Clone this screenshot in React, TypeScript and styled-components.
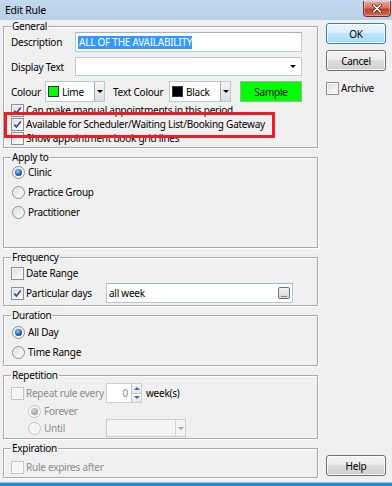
import React from 'react'
import styled, { createGlobalStyle } from 'styled-components'

const GlobalStyle = createGlobalStyle`
  html, body {
    margin: 0;
    padding: 0;
    background: #f0f0f0;
  }
  body {
    font-family: 'Noto Sans', 'Open Sans', sans-serif;
    font-size: 10px;
    letter-spacing: -0.25px;
    color: #000;
  }
  * {
    box-sizing: border-box;
  }
`

const Window = styled.div`
  width: 392px;
  height: 486px;
  display: flex;
  flex-direction: column;
  overflow: hidden;
  background: #f0f0f0;
`

const TitleBar = styled.div`
  height: 20px;
  flex: none;
  display: flex;
  align-items: center;
  padding-left: 5px;
  background: linear-gradient(#c3d8ef, #b9d0e9);
`

const Title = styled.span`
  font-size: 10.5px;
`

const CloseButton = styled.div`
  align-self: flex-start;
  margin: 1px 1px 0 auto;
  width: 28px;
  height: 16px;
  display: flex;
  align-items: center;
  justify-content: center;
  border: 1px solid #7d2a1f;
  border-top: none;
  border-radius: 0 0 4px 4px;
  background: linear-gradient(#e9a99c 0%, #d8725f 45%, #c0402a 55%, #d06a4f 100%);
  box-shadow: inset 0 0 0 1px rgba(255, 255, 255, 0.35);
`

const Body = styled.div`
  flex: 1;
  display: flex;
`

const LeftColumn = styled.div`
  width: 315px;
  margin-left: 3px;
  display: flex;
  flex-direction: column;
  gap: 3px;
`

const Group = styled.fieldset<{ $height: number }>`
  margin: 0;
  padding: 0 4px 0 7px;
  min-width: 0;
  height: ${({ $height }) => $height}px;
  border: 1px solid #a9a9a9;
  box-shadow: inset 1px 1px 0 #fff, 1px 1px 0 #fff;
  color: #000;
`

const Legend = styled.legend`
  padding: 0 1px;
  line-height: 12px;
  font-size: 10px;
  color: #000;
`

const Row = styled.div<{ $h: number; $mt?: number; $indent?: number }>`
  display: flex;
  align-items: center;
  height: ${({ $h }) => $h}px;
  margin-top: ${({ $mt }) => $mt ?? 0}px;
  padding-left: ${({ $indent }) => $indent ?? 0}px;
`

const FieldLabel = styled.span<{ $w: number; $disabled?: boolean; $ml?: number }>`
  flex: none;
  width: ${({ $w }) => $w}px;
  margin-left: ${({ $ml }) => $ml ?? 0}px;
  color: ${({ $disabled }) => ($disabled ? '#8b8b8b' : '#000')};
  white-space: nowrap;
`

const TextBox = styled.div<{ $w: number; $h: number }>`
  flex: none;
  width: ${({ $w }) => $w}px;
  height: ${({ $h }) => $h}px;
  display: flex;
  align-items: center;
  padding: 0 2px;
  background: #fff;
  border: 1px solid #b9c6d4;
  border-top-color: #a6b4c4;
  white-space: nowrap;
`

const Selected = styled.span`
  background: #3399ff;
  color: #fff;
  line-height: 13px;
  padding: 0 0 0 1px;
`

const Arrow = styled.span<{ $color?: string }>`
  width: 0;
  height: 0;
  border-left: 3px solid transparent;
  border-right: 3px solid transparent;
  border-top: 3px solid ${({ $color }) => $color ?? '#000'};
`

const ComboBox = styled(TextBox)<{ $disabled?: boolean }>`
  justify-content: space-between;
  padding: ${({ $disabled }) => ($disabled ? '0' : '0 5px 0 2px')};
  background: ${({ $disabled }) => ($disabled ? '#f4f4f4' : '#fff')};
  border-color: ${({ $disabled }) => ($disabled ? '#cdcdcd' : '#b9c6d4')};
`

const ColourCombo = styled.div<{ $w: number }>`
  flex: none;
  width: ${({ $w }) => $w}px;
  height: 21px;
  display: flex;
  align-items: center;
  background: #fff;
  border: 1px solid #b9c6d4;
  padding-left: 2px;
`

const Swatch = styled.span<{ $color: string }>`
  width: 11px;
  height: 11px;
  flex: none;
  background: ${({ $color }) => $color};
  border: 1px solid #333;
  margin-right: 3px;
`

const DropButton = styled.span<{ $disabled?: boolean }>`
  margin-left: auto;
  width: 10px;
  height: 100%;
  display: flex;
  align-items: center;
  justify-content: center;
  border-left: 1px solid ${({ $disabled }) => ($disabled ? '#d4d4d4' : '#a8a8a8')};
  background: ${({ $disabled }) => ($disabled ? '#f4f4f4' : 'linear-gradient(#f6f6f6, #dedede)')};
`

const SampleButton = styled.div`
  flex: none;
  width: 62px;
  height: 21px;
  margin-left: 9px;
  display: flex;
  align-items: center;
  justify-content: center;
  background: #00ff00;
  border: 1px solid #9ab59a;
`

const CheckStack = styled.div`
  position: relative;
  margin-top: 1px;
`

const Highlight = styled.div`
  position: absolute;
  left: -7px;
  top: 9px;
  width: 271px;
  height: 26px;
  border: 3px solid #e5202a;
  pointer-events: none;
`

const Box = styled.span<{ $disabled?: boolean }>`
  flex: none;
  width: 13px;
  height: 13px;
  display: flex;
  align-items: center;
  justify-content: center;
  border: 1px solid ${({ $disabled }) => ($disabled ? '#c3c3c3' : '#8e8f8f')};
  background: ${({ $disabled }) =>
    $disabled ? '#f4f4f4' : 'linear-gradient(135deg, #d6d9de 0%, #f2f2f2 60%, #fcfcfc 100%)'};
  box-shadow: inset 0 0 0 1px ${({ $disabled }) => ($disabled ? '#fafafa' : '#f4f4f4')};
  margin-right: 2px;
`

const Round = styled(Box)`
  border-radius: 50%;
  margin: 0 3px 0 1px;
`

const Dot = styled.span<{ $disabled?: boolean }>`
  width: 7px;
  height: 7px;
  border-radius: 50%;
  background: ${({ $disabled }) =>
    $disabled
      ? 'radial-gradient(circle at 40% 35%, #d8d8d8, #9a9a9a 75%)'
      : 'radial-gradient(circle at 40% 35%, #8fd3f7, #1d5fa6 55%, #0e3a70 100%)'};
`

const Label = styled.span<{ $disabled?: boolean }>`
  color: ${({ $disabled }) => ($disabled ? '#8b8b8b' : '#000')};
  white-space: nowrap;
`

const EllipsisButton = styled.span`
  margin-left: auto;
  width: 12px;
  height: 12px;
  display: flex;
  align-items: flex-end;
  justify-content: center;
  font-size: 8px;
  line-height: 9px;
  letter-spacing: 0;
  border: 1px solid #707070;
  border-radius: 2px;
  background: linear-gradient(#f4f4f4, #d8d8d8);
`

const Spin = styled.div`
  flex: none;
  width: 36px;
  height: 20px;
  display: flex;
  border: 1px solid #cdcdcd;
  background: #fff;
`

const SpinValue = styled.span`
  flex: 1;
  text-align: right;
  padding-right: 3px;
  line-height: 18px;
  color: #8b8b8b;
`

const SpinButtons = styled.div`
  width: 10px;
  display: flex;
  flex-direction: column;
  border-left: 1px solid #c7c7c7;
`

const SpinHalf = styled.span<{ $up?: boolean }>`
  flex: 1;
  display: flex;
  align-items: center;
  justify-content: center;
  background: linear-gradient(#f8f8f8, #e6e6e6);
  border-bottom: ${({ $up }) => ($up ? '1px solid #c7c7c7' : 'none')};
`

const SpinArrow = styled.span<{ $up?: boolean }>`
  width: 0;
  height: 0;
  border-left: 3px solid transparent;
  border-right: 3px solid transparent;
  ${({ $up }) => ($up ? 'border-bottom: 3px solid #4467a8;' : 'border-top: 3px solid #4467a8;')}
`

const Units = styled.span`
  margin-left: 4px;
`

const RightColumn = styled.div`
  flex: 1;
  display: flex;
  flex-direction: column;
  padding: 3px 6px 6px 8px;
`

const PushButton = styled.div<{ $default?: boolean; $mt?: number }>`
  width: 60px;
  height: 21px;
  margin-top: ${({ $mt }) => $mt ?? 0}px;
  display: flex;
  align-items: center;
  justify-content: center;
  border: 1px solid ${({ $default }) => ($default ? '#3c7fb1' : '#707070')};
  border-radius: 3px;
  background: ${({ $default }) =>
    $default
      ? 'linear-gradient(#eaf6fd 0%, #d9f0fc 50%, #bee6fd 50%, #a7d9f5 100%)'
      : 'linear-gradient(#f2f2f2 0%, #ebebeb 50%, #dddddd 50%, #cfcfcf 100%)'};
  box-shadow: inset 0 0 0 1px rgba(255, 255, 255, 0.75);
`

const Spacer = styled.div`
  flex: 1;
`

const BottomFrame = styled.div`
  height: 4px;
  flex: none;
  border-top: 1px solid #8cc6ee;
  background: #2f86d0;
`

const Tick = () => (
  <svg width='9' height='9' viewBox='0 0 9 9'>
    <path d='M1.2 4.6 L3.4 7 L7.8 1.4' fill='none' stroke='#2a4a9a' strokeWidth='1.6' />
  </svg>
)

const CloseGlyph = () => (
  <svg width='10' height='9' viewBox='0 0 10 9'>
    <path d='M1.5 1 L8.5 8 M8.5 1 L1.5 8' stroke='#5a1a10' strokeWidth='3' strokeLinecap='round' />
    <path d='M1.5 1 L8.5 8 M8.5 1 L1.5 8' stroke='#fff' strokeWidth='1.6' strokeLinecap='round' />
  </svg>
)

const Check = ({ checked, disabled }: { checked?: boolean; disabled?: boolean }) => (
  <Box $disabled={disabled}>{checked && <Tick />}</Box>
)

const Radio = ({ checked, disabled }: { checked?: boolean; disabled?: boolean }) => (
  <Round $disabled={disabled}>{checked && <Dot $disabled={disabled} />}</Round>
)

export default function App() {
  return (
    <>
      <GlobalStyle />
      <Window>
        <TitleBar>
          <Title>Edit Rule</Title>
          <CloseButton>
            <CloseGlyph />
          </CloseButton>
        </TitleBar>
        <Body>
          <LeftColumn>
            <Group $height={128}>
              <Legend>General</Legend>
              <Row $h={20}>
                <FieldLabel $w={64}>Description</FieldLabel>
                <TextBox $w={227} $h={20}>
                  <Selected>ALL OF THE AVAILABILITY</Selected>
                </TextBox>
              </Row>
              <Row $h={19} $mt={5}>
                <FieldLabel $w={64}>Display Text</FieldLabel>
                <ComboBox $w={227} $h={19}>
                  <span />
                  <Arrow />
                </ComboBox>
              </Row>
              <Row $h={21} $mt={5}>
                <FieldLabel $w={34}>Colour</FieldLabel>
                <ColourCombo $w={60}>
                  <Swatch $color='#00ff00' />
                  Lime
                  <DropButton>
                    <Arrow />
                  </DropButton>
                </ColourCombo>
                <FieldLabel $w={56} $ml={8}>
                  Text Colour
                </FieldLabel>
                <ColourCombo $w={62}>
                  <Swatch $color='#000' />
                  Black
                  <DropButton>
                    <Arrow />
                  </DropButton>
                </ColourCombo>
                <SampleButton>Sample</SampleButton>
              </Row>
              <CheckStack>
                <Row $h={14}>
                  <Check checked />
                  <Label>Can make manual appointments in this period</Label>
                </Row>
                <Row $h={14}>
                  <Check checked />
                  <Label>Available for Scheduler/Waiting List/Booking Gateway</Label>
                </Row>
                <Row $h={14}>
                  <Check />
                  <Label>Show appointment book grid lines</Label>
                </Row>
                <Highlight />
              </CheckStack>
            </Group>

            <Group $height={97}>
              <Legend>Apply to</Legend>
              <Row $h={20} $mt={-1}>
                <Radio checked />
                <Label>Clinic</Label>
              </Row>
              <Row $h={20}>
                <Radio />
                <Label>Practice Group</Label>
              </Row>
              <Row $h={20}>
                <Radio />
                <Label>Practitioner</Label>
              </Row>
            </Group>

            <Group $height={55}>
              <Legend>Frequency</Legend>
              <Row $h={18} $mt={1}>
                <Check />
                <Label>Date Range</Label>
              </Row>
              <Row $h={20} $mt={1}>
                <Check checked />
                <FieldLabel $w={80}>Particular days</FieldLabel>
                <TextBox $w={187} $h={20}>
                  all week
                  <EllipsisButton>...</EllipsisButton>
                </TextBox>
              </Row>
            </Group>

            <Group $height={57}>
              <Legend>Duration</Legend>
              <Row $h={20} $mt={1}>
                <Radio checked />
                <Label>All Day</Label>
              </Row>
              <Row $h={20}>
                <Radio />
                <Label>Time Range</Label>
              </Row>
            </Group>

            <Group $height={70}>
              <Legend>Repetition</Legend>
              <Row $h={20} $mt={2}>
                <Check disabled />
                <FieldLabel $w={80} $disabled>
                  Repeat rule every
                </FieldLabel>
                <Spin>
                  <SpinValue>0</SpinValue>
                  <SpinButtons>
                    <SpinHalf $up>
                      <SpinArrow $up />
                    </SpinHalf>
                    <SpinHalf>
                      <SpinArrow />
                    </SpinHalf>
                  </SpinButtons>
                </Spin>
                <Units>week(s)</Units>
              </Row>
              <Row $h={16} $indent={16}>
                <Radio checked disabled />
                <Label $disabled>Forever</Label>
              </Row>
              <Row $h={18} $indent={16}>
                <Radio disabled />
                <FieldLabel $w={62} $disabled>
                  Until
                </FieldLabel>
                <ComboBox $w={80} $h={18} $disabled>
                  <DropButton $disabled>
                    <Arrow $color='#a0a0a0' />
                  </DropButton>
                </ComboBox>
              </Row>
            </Group>

            <Group $height={36}>
              <Legend>Expiration</Legend>
              <Row $h={18} $mt={4}>
                <Check disabled />
                <Label $disabled>Rule expires after</Label>
              </Row>
            </Group>
          </LeftColumn>

          <RightColumn>
            <PushButton $default>OK</PushButton>
            <PushButton $mt={6}>Cancel</PushButton>
            <Row $h={16} $mt={9}>
              <Check />
              <Label>Archive</Label>
            </Row>
            <Spacer />
            <PushButton>Help</PushButton>
          </RightColumn>
        </Body>
        <BottomFrame />
      </Window>
    </>
  )
}
